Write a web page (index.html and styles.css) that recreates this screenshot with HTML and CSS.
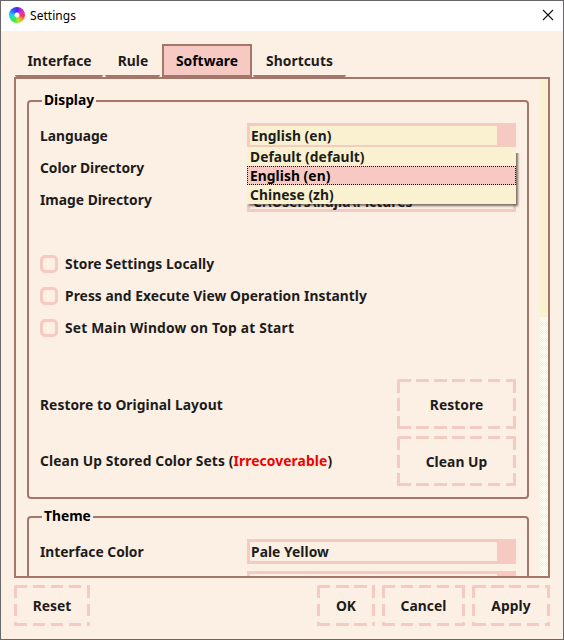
FILE: index.html
```html
<!DOCTYPE html>
<html lang="en">
<head>
<meta charset="utf-8">
<title>Settings</title>
<link rel="stylesheet" href="styles.css">
</head>
<body>
<div class="window">
  <header class="titlebar">
    <span class="logo"></span>
    <span class="title">Settings</span>
    <svg class="close" width="12" height="12" viewBox="0 0 12 12"><path d="M1 1L11 11M11 1L1 11" stroke="#111" stroke-width="1.1" fill="none"/></svg>
  </header>
  <nav class="tabs">
    <div class="tab tab-interface">Interface</div>
    <div class="tab tab-rule">Rule</div>
    <div class="tab tab-software active">Software</div>
    <div class="tab tab-shortcuts">Shortcuts</div>
  </nav>
  <main class="pane">
    <div class="content">
      <section class="group display">
        <h2 class="legend">Display</h2>
        <div class="row">
          <span class="label">Language</span>
          <div class="combo open"><span class="value">English (en)</span><span class="drop"></span>
            <ul class="menu">
              <li>Default (default)</li>
              <li class="selected">English (en)</li>
              <li>Chinese (zh)</li>
            </ul>
          </div>
        </div>
        <div class="row"><span class="label">Color Directory</span><div class="field"></div></div>
        <div class="row"><span class="label">Image Directory</span><div class="field">C:\Users\liujia\Pictures</div></div>
        <div class="checks">
          <div class="row"><span class="box"></span>Store Settings Locally</div>
          <div class="row"><span class="box"></span>Press and Execute View Operation Instantly</div>
          <div class="row on-top"><span class="box"></span>Set Main Window on Top at Start</div>
        </div>
        <div class="action"><span class="label">Restore to Original Layout</span><div class="button large">Restore</div></div>
        <div class="action cleanup"><span class="label">Clean Up Stored Color Sets (<span class="warn">Irrecoverable</span>)</span><div class="button large">Clean Up</div></div>
      </section>
      <section class="group theme">
        <h2 class="legend">Theme</h2>
        <div class="row"><span class="label">Interface Color</span><div class="combo"><span class="value">Pale Yellow</span><span class="drop"></span></div></div>
        <div class="row"><span class="label"></span><div class="combo"><span class="value"></span><span class="drop"></span></div></div>
      </section>
    </div>
    <div class="scrollbar">
      <div class="thumb"></div>
      <svg class="track" width="8" height="259" shape-rendering="crispEdges">
        <defs><pattern id="dots" width="2" height="2" patternUnits="userSpaceOnUse"><rect width="2" height="2" fill="#fffff4"/><rect width="1" height="1" fill="#f8f6cc"/><rect x="1" y="1" width="1" height="1" fill="#f8f6cc"/></pattern></defs>
        <rect width="8" height="259" fill="url(#dots)"/>
      </svg>
    </div>
  </main>
  <footer class="footer">
    <div class="button reset">Reset</div>
    <div class="button ok">OK</div>
    <div class="button cancel">Cancel</div>
    <div class="button apply">Apply</div>
  </footer>
</div>
</body>
</html>
```

FILE: styles.css
```css
* { box-sizing: border-box; }
body {
  margin: 0;
  font: 700 13.8px/20px "Noto Sans", sans-serif;
  letter-spacing: 0.06px;
  color: #1c1c1c;
}
.window {
  width: 564px;
  height: 640px;
  border: 1px solid #69666a;
  background: #fcefe3;
  display: flex;
  flex-direction: column;
  overflow: hidden;
  white-space: nowrap;
}
.titlebar {
  height: 30px;
  flex: none;
  background: #fff;
  display: flex;
  align-items: center;
  padding: 0 9px 2px 8px;
  font-size: 12px;
  font-weight: 400;
  color: #000;
}
.logo {
  width: 16px;
  height: 16px;
  border-radius: 50%;
  margin-right: 5px;
  background:
    radial-gradient(circle, #fff 0 2px, transparent 3px),
    conic-gradient(#4a22e8, #b12de0 35deg, #f02bb0 65deg, #f53b4c 100deg, #f5a22d 135deg, #b8e82d 165deg, #3fe83a 205deg, #28e8a0 240deg, #28c3f0 275deg, #2b6af0 315deg, #4a22e8);
}
.title { flex: 1; padding-top: 2px; letter-spacing: 0.05px; }
.tabs {
  display: flex;
  flex: none;
  height: 46px;
  padding: 13px 0 0 14px;
}
.tab {
  height: 33px;
  border-bottom: 2px solid #a5776b;
  border-radius: 0 0 2px 2px;
  text-align: center;
  line-height: 33px;
  margin-right: 2px;
}
.tab-interface { width: 88px; padding-left: 1px; }
.tab-rule { width: 55px; padding-left: 1px; }
.tab-software { width: 90px; }
.tab-shortcuts { width: 93px; margin-left: -1px; }
.tab.active {
  border: 2px solid #a5776b;
  border-radius: 0;
  background: #f6cac3;
  color: #000;
  line-height: 29px;
}
.pane {
  flex: none;
  height: 501px;
  width: 536px;
  margin-left: 13px;
  border: 2px solid #a5776b;
  display: flex;
  overflow: hidden;
}
.content { width: 524px; padding: 21px 0 0 11px; }
.scrollbar { width: 8px; background: #fbfae2; }
.thumb { height: 238px; background: #f9f1cf; }
.track { display: block; }
.group {
  width: 502px;
  border: 2px solid #a5776b;
  border-radius: 4px;
  padding: 0 11px;
}
.display { height: 399px; margin-bottom: 17px; }
.theme { height: 200px; }
.legend {
  margin: -12px 0 10px 2px;
  width: max-content;
  padding: 0 2px;
  background: #fcefe3;
  font: inherit;
  letter-spacing: 0;
  color: #000;
}
.row {
  display: flex;
  align-items: center;
  height: 32px;
}
.label { flex: 1; }
.row .label { letter-spacing: 0; }
.combo, .field {
  width: 269px;
  height: 24px;
  border: 3px solid #f4cbc3;
  border-bottom-width: 2px;
  padding-left: 1px;
  line-height: 19px;
}
.field { padding-left: 3px; border-bottom-width: 3px; line-height: 21px; }
.combo { position: relative; display: flex; margin-bottom: 2px; }
.theme .combo { height: 25px; border-bottom-width: 3px; margin-bottom: 1px; }
.combo .value { flex: 1; }
.combo .drop { width: 16px; background: #f6cac3; }
.combo.open { background: #f9f1cf; }
.menu {
  position: absolute;
  z-index: 1;
  left: -3px;
  top: 21px;
  width: 269px;
  margin: 0;
  padding: 0;
  list-style: none;
  background: #f9f1cf;
  box-shadow: 2px 2px 2px rgba(40, 30, 25, 0.6);
  clip-path: polygon(0 0, 269px 0, 269px 6px, 275px 6px, 275px 64px, 0 64px);
}
.menu li {
  height: 19px;
  padding-left: 3px;
  line-height: 19px;
}
.menu .selected {
  border: 1px dotted #111;
  padding-left: 2px;
  line-height: 17px;
  background: #f6cac3;
  color: #000;
}
.checks { margin: 32px 0 35px; }
.on-top { letter-spacing: 0.19px; }
.box {
  width: 18px;
  height: 18px;
  border: 3px solid #f6cac3;
  border-radius: 5px;
  margin-right: 7px;
}
.action {
  display: flex;
  align-items: center;
  height: 50px;
  margin-bottom: 7px;
}
.action .label { padding-top: 1px; }
.cleanup .label { padding: 0 0 1px; letter-spacing: 0.11px; }
.warn { color: #f00000; }
.button {
  --h: repeating-linear-gradient(90deg, transparent 0 1px, #f4cbc3 1px 13.5px, transparent 13.5px 18px);
  --v: repeating-linear-gradient(180deg, transparent 0 1px, #f4cbc3 1px 13.5px, transparent 13.5px 18px);
  display: flex;
  align-items: center;
  justify-content: center;
  height: 41px;
  background:
    var(--h) 0 0 / 100% 3px no-repeat,
    var(--h) 0 100% / 100% 3px no-repeat,
    var(--v) 0 0 / 3px 100% no-repeat,
    var(--v) 100% 0 / 3px 100% no-repeat;
}
.button.large { width: 119px; height: 50px; padding-top: 1px; }
.footer {
  display: flex;
  flex: none;
  padding: 7px 13px 0;
  gap: 7px;
}
.reset { width: 76px; margin-right: auto; }
.ok { width: 58px; }
.cancel { width: 83px; }
.apply { width: 78px; }
```
